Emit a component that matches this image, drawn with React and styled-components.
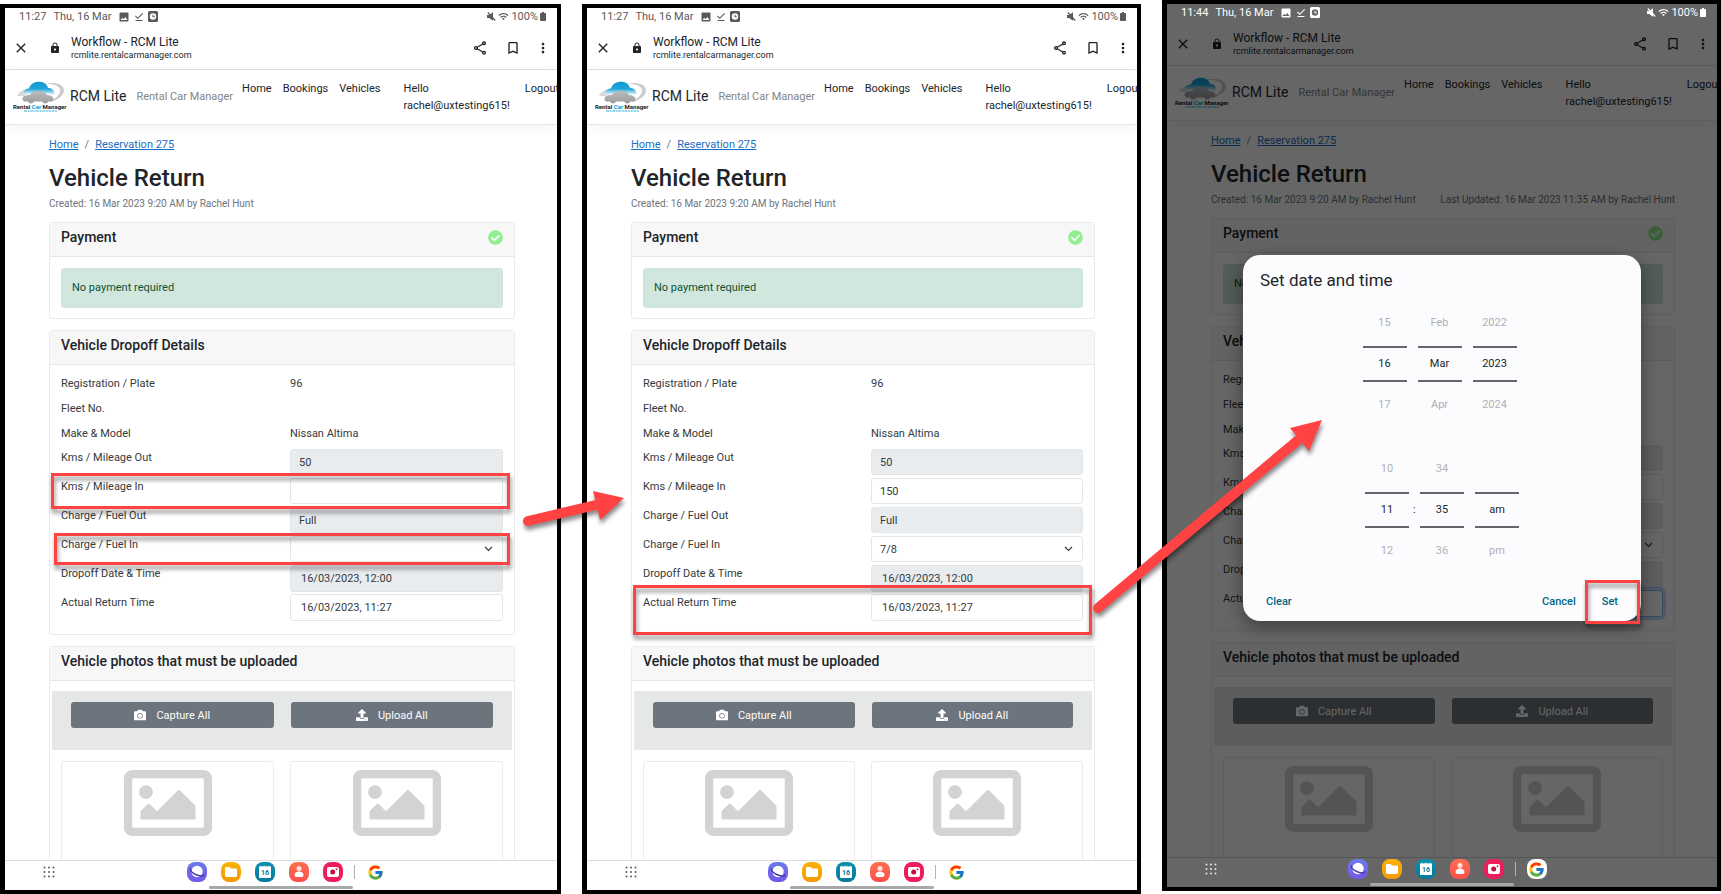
import React, { useState } from "react";
import styled, { createGlobalStyle, css } from "styled-components";
import {
  MdBookmarkBorder,
  MdClose,
  MdDownloadDone,
  MdImage,
  MdLock,
  MdMoreVert,
  MdOutlineShare,
  MdWifi,
} from "react-icons/md";
import { FaCamera, FaCheckCircle, FaUpload } from "react-icons/fa";
import { FcGoogle } from "react-icons/fc";

const GlobalStyle = createGlobalStyle`
  * {
    box-sizing: border-box;
  }
  body {
    margin: 0;
    background: #fff;
    color: #212529;
    font-family: Roboto, "Liberation Sans", sans-serif;
    font-size: 11px;
  }
  button, input, select {
    font: inherit;
    color: inherit;
  }
  svg {
    display: block;
    flex-shrink: 0;
  }
`;

// Board that holds the three tablet screens
const Board = styled.main`
  position: relative;
  display: grid;
  grid-template-columns: 561fr 559fr 559fr;
  gap: 21px;
  height: 100vh;
  min-height: 600px;
  overflow: hidden;
`;

const Screen = styled.section`
  position: relative;
  display: flex;
  flex-direction: column;
  min-width: 0;
  min-height: 0;
  margin: ${({ $raised }) => ($raised ? "0 0 3px" : "4px 0 0")};
  border: 4px solid #000;
  border-left-width: 5px;
  background: #fff;
  overflow: hidden;
`;

// System status bar
const StatusBar = styled.div`
  position: relative;
  z-index: 2;
  display: flex;
  align-items: center;
  height: 17px;
  padding: 0 11px 0 14px;
  color: ${({ $light }) => ($light ? "#fff" : "#5a5a5a")};
`;

const StatusDate = styled.span`
  margin: 0 7px;
`;

const StatusIcons = styled.span`
  display: flex;
  align-items: center;
  gap: 3px;
`;

const StatusRight = styled(StatusIcons)`
  margin-left: auto;
  gap: 2px;
`;

// Browser bar
const BrowserBar = styled.header`
  display: flex;
  align-items: center;
  height: 45px;
  padding: 1px 9px 0 8px;
  border-bottom: 1px solid #e2e2e2;
`;

const IconButton = styled.button`
  display: flex;
  align-items: center;
  justify-content: center;
  width: ${({ $size }) => $size || 16}px;
  padding: 0;
  border: 0;
  background: none;
  color: #202124;
  cursor: pointer;
`;

const PageInfo = styled.div`
  display: flex;
  align-items: center;
  gap: 10px;
  margin-left: 20px;
`;

const PageTitle = styled.div`
  font-size: 12px;
  line-height: 14px;
`;

const PageHost = styled.div`
  font-size: 9px;
  line-height: 12px;
`;

const BrowserActions = styled.div`
  display: flex;
  align-items: center;
  gap: 17px;
  margin-left: auto;
`;

// Site navigation
const NavBar = styled.nav`
  display: flex;
  align-items: flex-start;
  flex-shrink: 0;
  height: 55px;
  padding-left: 8px;
  border-bottom: 1px solid #e9e9e9;
  box-shadow: 0 3px 10px rgba(0, 0, 0, 0.05);
  white-space: nowrap;
  overflow: hidden;
  line-height: 17px;
`;

const Brand = styled.a`
  display: flex;
  align-items: center;
  gap: 3px;
  height: 52px;
  color: inherit;
  text-decoration: none;
`;

const BrandName = styled.span`
  font-size: 14px;
`;

const BrandSub = styled.span`
  margin-left: 7px;
  color: #858585;
`;

const NavLinks = styled.div`
  display: flex;
  gap: 11px;
  margin: 10px 0 0 9px;
`;

const NavLink = styled.a`
  color: inherit;
  text-decoration: none;
`;

const Greeting = styled(NavLink)`
  margin: 10px 15px 0 23px;
`;

const Logout = styled(NavLink)`
  margin-top: 10px;
`;

// Page content
const Content = styled.div`
  flex: 1;
  min-height: 0;
  padding: 12px 42px 0 44px;
  overflow: hidden;
`;

const Breadcrumb = styled.nav`
  display: flex;
  gap: 6px;
  line-height: 16px;
  color: #6c757d;

  a {
    color: #1b6ec2;
  }
`;

const Heading = styled.h1`
  margin: 9px 0 3px;
  font-size: 24px;
  font-weight: 500;
  line-height: 32px;
`;

const Meta = styled.div`
  display: flex;
  justify-content: space-between;
  font-size: 10px;
  line-height: 14px;
  color: #6c757d;
`;

const Card = styled.section`
  margin-top: 11px;
  border: 1px solid #ebebeb;
  border-radius: 3px;
  background: #fff;
`;

const CardHeader = styled.div`
  display: flex;
  align-items: center;
  justify-content: space-between;
  padding: 5px 11px 10px;
  border-bottom: 1px solid #e8e8e8;
  background: #f7f7f7;
  color: #90ee90;
`;

const CardTitle = styled.h2`
  margin: 0;
  font-size: 14px;
  font-weight: 500;
  line-height: 18px;
  color: #212529;
`;

const Alert = styled.p`
  margin: 11px 11px 10px;
  padding: 10px;
  border: 1px solid #cbe4d9;
  border-radius: 3px;
  background: #d1e7dd;
  color: #0f5132;
  line-height: 18px;
`;

const Details = styled.div`
  padding: 6px 11px 11px;
  color: #343a40;
`;

const Row = styled.div`
  position: relative;
  display: grid;
  grid-template-columns: 1fr 1fr;
  gap: 16px;
`;

const Facts = styled.dl`
  margin: 0 0 3px;
  line-height: 25px;

  dd {
    margin: 0;
  }
`;

const FieldRow = styled(Row)`
  height: 29px;

  label {
    line-height: 18px;
  }
`;

const fieldBox = css`
  width: 100%;
  height: ${({ $tall }) => ($tall ? 27 : 26)}px;
  padding: 0 ${({ $tall }) => ($tall ? 10 : 8)}px;
  border: 1px solid #e3e6e9;
  border-radius: 3px;
  background: #fff;
  outline: none;
`;

const Input = styled.input`
  ${fieldBox}

  &:read-only {
    background: #e9ecef;
  }

  ${({ $active }) =>
    $active &&
    css`
      border-color: #86b7fe;
      box-shadow: 0 0 0 3px rgba(13, 110, 253, 0.25);
    `}
`;

const SelectWrap = styled.div`
  position: relative;

  svg {
    position: absolute;
    top: 9px;
    right: 10px;
    pointer-events: none;
  }
`;

const Select = styled.select`
  ${fieldBox}
  appearance: none;
`;

// Red outline around a part that needs attention
const Highlight = styled.span`
  position: absolute;
  z-index: 4;
  inset: ${({ $inset }) => $inset};
  border: 3px solid #ff4343;
  filter: drop-shadow(1px 4px 2px rgba(0, 0, 0, 0.45));
  pointer-events: none;
`;

// Photos
const PhotoActions = styled.div`
  display: grid;
  grid-template-columns: 1fr 1fr;
  gap: 17px;
  margin: 10px 2px 11px;
  padding: 11px 19px 22px;
  background: #e6e8e7;
`;

const PhotoButton = styled.button`
  display: flex;
  align-items: center;
  justify-content: center;
  gap: 10px;
  height: 26px;
  padding: 0;
  border: 0;
  border-radius: 3px;
  background: #6c757d;
  color: #fff;
`;

const Thumbs = styled.div`
  display: grid;
  grid-template-columns: 1fr 1fr;
  gap: 16px;
  padding: 0 11px;
`;

const Thumb = styled.div`
  display: flex;
  justify-content: center;
  height: 180px;
  padding-top: 8px;
  border: 1px solid #ececec;
  border-radius: 3px;
`;

// Tablet task bar
const TaskBar = styled.footer`
  position: relative;
  z-index: 2;
  display: grid;
  grid-template-columns: 1fr auto 1fr;
  grid-template-rows: 22px 6px;
  flex-shrink: 0;
  height: 30px;
  border-top: 1px solid ${({ $dark }) => ($dark ? "#555" : "#dcdcdc")};
  background: ${({ $dark }) => ($dark ? "transparent" : "#fff")};
  color: ${({ $dark }) => ($dark ? "#e8e8e8" : "#5c5c5c")};
`;

const Launcher = styled(IconButton)`
  align-self: center;
  margin-left: 36px;
  color: inherit;
`;

const Apps = styled.div`
  display: flex;
  align-items: center;
  gap: 14px;
  padding-left: 10px;
`;

const AppIcon = styled(IconButton)`
  height: 20px;
  border-radius: 8px;
  background: ${({ $bg }) => $bg};
`;

const AppDivider = styled.span`
  width: 1px;
  height: 14px;
  margin: 0 -3px;
  background: #b5b5b5;
`;

const HomeBar = styled.span`
  grid-row: 2;
  grid-column: 1 / -1;
  justify-self: center;
  align-self: end;
  width: 144px;
  height: 3px;
  border-radius: 2px;
  background: #a8a8a8;
`;

// Date and time dialog
const Scrim = styled.div`
  position: absolute;
  z-index: 1;
  inset: 0;
  display: flex;
  align-items: center;
  justify-content: center;
  padding-bottom: 16px;
  background: rgba(0, 0, 0, 0.6);
`;

const Dialog = styled.div`
  width: 398px;
  max-width: 90%;
  padding: 13px 17px 1px;
  border-radius: 17px;
  background: #fcfcff;
  box-shadow: 0 6px 18px rgba(0, 0, 0, 0.4);
`;

const DialogTitle = styled.h2`
  margin: 0 0 8px;
  font-size: 17px;
  font-weight: 400;
  line-height: 24px;
`;

const Wheels = styled.div`
  display: flex;
  justify-content: center;
  gap: 11px;
  margin-bottom: ${({ $gap }) => $gap}px;
  padding-right: ${({ $shift }) => $shift || 0}px;
`;

const Wheel = styled.div`
  position: relative;
  display: grid;
  grid-template-rows: 46px 36px 46px;
  width: 44px;
`;

const WheelStep = styled.button`
  padding: 0;
  border: 0;
  background: none;
  color: #b0b0b3;
`;

const WheelValue = styled.input`
  width: 100%;
  padding: 0;
  border: solid #63666a;
  border-width: 2px 0;
  background: none;
  text-align: center;
  outline: none;
`;

const Colon = styled.span`
  position: absolute;
  top: 46px;
  left: -7px;
  line-height: 36px;
`;

const DialogActions = styled.div`
  display: flex;
  align-items: center;
  justify-content: space-between;
`;

const ActionGroup = styled.div`
  display: flex;
  gap: 14px;
`;

const TextButton = styled.button`
  position: relative;
  height: 36px;
  padding: 0 6px;
  border: 0;
  background: none;
  color: #006783;
  font-weight: 500;
`;

const Arrows = styled.svg`
  position: absolute;
  z-index: 5;
  inset: 0;
  width: 100%;
  height: 100%;
  pointer-events: none;
  filter: drop-shadow(1px 4px 2px rgba(0, 0, 0, 0.45));
`;

const Logo = () => (
  <svg width="54" height="31" viewBox="0 0 54 31" aria-label="Rental Car Manager">
    <defs>
      <linearGradient id="sky" x1="0" y1="0" x2="0" y2="1">
        <stop offset="0" stopColor="#0f9ad0" />
        <stop offset="0.55" stopColor="#1fa5d8" />
        <stop offset="1" stopColor="#e6f4fa" />
      </linearGradient>
      <linearGradient id="metal" x1="0" y1="0" x2="0" y2="1">
        <stop offset="0" stopColor="#bcbcbe" />
        <stop offset="1" stopColor="#9b9c9f" />
      </linearGradient>
    </defs>
    <path d="M31 3c10-2.500 19.500-.5 20 6 .3 5.500-6 10.500-15.500 12.500 7-4 12-8 11.500-12.500C46.500 4 39 2.500 31 3z" fill="#cbccce" />
    <path d="M4 15c2-4 5-6 9-7l3 3-5 4z" fill="#d6d7d9" />
    <path d="M10 13.500c0-3.500 2.500-6 6-6C17.500 3 21 .8 26 .8s8 2.700 9 6.200c4 0 6.500 2.500 6.500 6.500z" fill="url(#sky)" />
    <path d="M11 20.500c-2-1.200-2-3.500-.5-5 1.500-1.300 4-1.500 6.500-1.500 1.500-2.500 4-4 8-4s7 1.500 9 4c3.500.2 6.500 1.500 6.500 4.300 0 1.200-.7 2-2 2.200h-3.200a3.200 3.200 0 0 1-6 0H21a3.200 3.200 0 0 1-6 0z" fill="url(#metal)" />
    <text x="0" y="28" fontSize="6" fontWeight="700" fill="#222" fontFamily="Roboto, sans-serif">
      Rental
      <tspan fill="#0f9ad0"> Car </tspan>
      Manager
    </text>
    <path d="M11 30h33" stroke="#35b1dd" strokeWidth="1" strokeDasharray="3 .6 2 .5" />
  </svg>
);

const ClockBadge = () => (
  <svg width="10" height="11" viewBox="0 0 10 11">
    <path
      d="M1.500 0h7A1.500 1.500 0 0 1 10 1.500v8A1.500 1.500 0 0 1 8.500 11h-7A1.500 1.500 0 0 1 0 9.500v-8A1.500 1.500 0 0 1 1.500 0zM5 2.300a3.200 3.200 0 1 0 0 6.400 3.200 3.200 0 0 0 0-6.400zm-.5 1.500h1v1.500h1.300v1H4.500z"
      fill="currentColor"
      fillRule="evenodd"
    />
  </svg>
);

const Muted = () => (
  <svg width="9" height="9" viewBox="0 0 9 9">
    <path d="M0 3h2.200L6 .3v8.400L2.200 6H0z" fill="currentColor" />
    <path d="M.8.5l7.400 8" stroke="currentColor" strokeWidth="1.200" />
  </svg>
);

const Battery = () => (
  <svg width="6" height="9" viewBox="0 0 6 9">
    <path d="M2 0h2v1h1.500l.5.500v7l-.5.500h-5L0 8.500v-7L.5 1H2z" fill="currentColor" />
  </svg>
);

const Chevron = () => (
  <svg width="9" height="8" viewBox="0 0 9 8">
    <path d="M1 2l3.500 3.500L8 2" fill="none" stroke="#343a40" strokeWidth="1.200" />
  </svg>
);

const Picture = () => (
  <svg width="88" height="66" viewBox="0 64 512 384" fill="#d3d3d3">
    <path d="M464 64H48C21.490 64 0 85.490 0 112v288c0 26.510 21.490 48 48 48h416c26.510 0 48-21.490 48-48V112c0-26.510-21.490-48-48-48zm-6 336H54a6 6 0 0 1-6-6V118a6 6 0 0 1 6-6h404a6 6 0 0 1 6 6v276a6 6 0 0 1-6 6zM128 152c-22.091 0-40 17.909-40 40s17.909 40 40 40 40-17.909 40-40-17.909-40-40-40zM96 352h320v-80l-87.515-87.515c-4.686-4.686-12.284-4.686-16.971 0L192 304l-39.515-39.515c-4.686-4.686-12.284-4.686-16.971 0L96 304v48z" />
  </svg>
);

const DotGrid = () => (
  <svg width="12" height="12" viewBox="0 0 12 12" fill="currentColor">
    {[1.5, 6, 10.5].map((y) =>
      [1.5, 6, 10.5].map((x) => <circle key={`${x}-${y}`} cx={x} cy={y} r="1" />)
    )}
  </svg>
);

const apps = [
  {
    name: "Internet",
    bg: "linear-gradient(#6b7bea, #7457e8)",
    art: (
      <>
        <circle cx="10" cy="9.500" r="5.700" fill="#fff" />
        <path d="M3.800 6.500c-1.500 2 2 5 6 6.500s7.500 1.500 7-.8" fill="none" stroke="#4a36a8" strokeWidth="1.400" />
      </>
    ),
  },
  {
    name: "My Files",
    bg: "linear-gradient(#fbb106, #f59a05)",
    art: <path d="M4 6.200C4 5.500 4.500 5 5.200 5h3.300l1.500 1.500h4.800c.7 0 1.200.5 1.200 1.200v6.100c0 .7-.5 1.200-1.200 1.200H5.200C4.500 15 4 14.500 4 13.800z" fill="#fff" />,
  },
  {
    name: "Calendar",
    bg: "linear-gradient(#0b8fae, #057a9c)",
    art: (
      <>
        <path d="M4 4.500h1.500V3.700h1v.8h2v-.8h1v.8h1v-.8h1v.8h2v-.8h1v.8H16V15a1 1 0 0 1-1 1H5a1 1 0 0 1-1-1z" fill="#fff" />
        <text x="10" y="13" textAnchor="middle" fontSize="7" fontWeight="700" fill="#057a9c">
          16
        </text>
      </>
    ),
  },
  {
    name: "Contacts",
    bg: "linear-gradient(#ff6f50, #fb4f4c)",
    art: (
      <>
        <circle cx="10" cy="6.500" r="2.500" fill="#ffe1da" />
        <path d="M5.500 13.200c0-2.500 2-3.700 4.500-3.700s4.500 1.200 4.500 3.700c0 1.300-1 1.800-4.500 1.800s-4.500-.5-4.500-1.800z" fill="#fff" />
      </>
    ),
  },
  {
    name: "Camera",
    bg: "#ee1c5a",
    art: (
      <>
        <rect x="4" y="5" width="12" height="10" rx="2" fill="#fff" />
        <circle cx="9.700" cy="10" r="2.500" fill="#c80b43" />
        <circle cx="13.500" cy="7.300" r="1" fill="#ee1c5a" />
      </>
    ),
  },
];

const StatusRow = ({ time, light }) => (
  <StatusBar $light={light}>
    {time}
    <StatusDate>Thu, 16 Mar</StatusDate>
    <StatusIcons>
      <MdImage size={12} />
      <MdDownloadDone size={12} />
      <ClockBadge />
    </StatusIcons>
    <StatusRight>
      <Muted />
      <MdWifi size={11} />
      100%
      <Battery />
    </StatusRight>
  </StatusBar>
);

const Browser = () => (
  <BrowserBar>
    <IconButton aria-label="Close">
      <MdClose size={16} />
    </IconButton>
    <PageInfo>
      <MdLock size={12} />
      <div>
        <PageTitle>Workflow - RCM Lite</PageTitle>
        <PageHost>rcmlite.rentalcarmanager.com</PageHost>
      </div>
    </PageInfo>
    <BrowserActions>
      <IconButton aria-label="Share">
        <MdOutlineShare size={16} />
      </IconButton>
      <IconButton aria-label="Bookmark">
        <MdBookmarkBorder size={16} />
      </IconButton>
      <IconButton aria-label="More" $size={10}>
        <MdMoreVert size={16} />
      </IconButton>
    </BrowserActions>
  </BrowserBar>
);

const SiteNav = () => (
  <NavBar>
    <Brand href="#">
      <Logo />
      <BrandName>RCM Lite</BrandName>
      <BrandSub>Rental Car Manager</BrandSub>
    </Brand>
    <NavLinks>
      <NavLink href="#">Home</NavLink>
      <NavLink href="#">Bookings</NavLink>
      <NavLink href="#">Vehicles</NavLink>
    </NavLinks>
    <Greeting href="#">
      Hello
      <br />
      rachel@uxtesting615!
    </Greeting>
    <Logout href="#">Logout</Logout>
  </NavBar>
);

const Field = ({ id, label, value, readOnly, tall, active, mark }) => {
  const [text, setText] = useState(value);
  return (
    <FieldRow>
      <label htmlFor={id}>{label}</label>
      <div>
        <Input
          id={id}
          value={text}
          readOnly={readOnly}
          onChange={(e) => setText(e.target.value)}
          $tall={tall}
          $active={active}
        />
      </div>
      {mark && <Highlight $inset={mark} />}
    </FieldRow>
  );
};

const FuelField = ({ id, value, mark }) => {
  const [fuel, setFuel] = useState(value);
  return (
    <FieldRow>
      <label htmlFor={id}>Charge / Fuel In</label>
      <SelectWrap>
        <Select id={id} value={fuel} onChange={(e) => setFuel(e.target.value)}>
          <option value=""></option>
          <option value="7/8">7/8</option>
          <option value="Full">Full</option>
        </Select>
        <Chevron />
      </SelectWrap>
      {mark && <Highlight $inset={mark} />}
    </FieldRow>
  );
};

const ReturnPage = ({ id, kms, fuel, updated, marks = {}, active }) => (
  <Content>
    <Breadcrumb>
      <a href="#">Home</a>
      <span>/</span>
      <a href="#">Reservation 275</a>
    </Breadcrumb>
    <Heading>Vehicle Return</Heading>
    <Meta>
      <span>Created: 16 Mar 2023 9:20 AM by Rachel Hunt</span>
      {updated && <span>Last Updated: {updated} by Rachel Hunt</span>}
    </Meta>

    <Card>
      <CardHeader>
        <CardTitle>Payment</CardTitle>
        <FaCheckCircle size={15} />
      </CardHeader>
      <Alert>No payment required</Alert>
    </Card>

    <Card>
      <CardHeader>
        <CardTitle>Vehicle Dropoff Details</CardTitle>
      </CardHeader>
      <Details>
        <Facts>
          <Row>
            <dt>Registration / Plate</dt>
            <dd>96</dd>
          </Row>
          <Row>
            <dt>Fleet No.</dt>
            <dd></dd>
          </Row>
          <Row>
            <dt>Make &amp; Model</dt>
            <dd>Nissan Altima</dd>
          </Row>
        </Facts>
        <Field id={`${id}-kms-out`} label="Kms / Mileage Out" value="50" readOnly />
        <Field id={`${id}-kms-in`} label="Kms / Mileage In" value={kms} mark={marks.kms} />
        <Field id={`${id}-fuel-out`} label="Charge / Fuel Out" value="Full" readOnly />
        <FuelField id={`${id}-fuel-in`} value={fuel} mark={marks.fuel} />
        <Field id={`${id}-dropoff`} label="Dropoff Date & Time" value="16/03/2023, 12:00" readOnly tall />
        <Field
          id={`${id}-return`}
          label="Actual Return Time"
          value="16/03/2023, 11:27"
          tall
          active={active}
          mark={marks.time}
        />
      </Details>
    </Card>

    <Card>
      <CardHeader>
        <CardTitle>Vehicle photos that must be uploaded</CardTitle>
      </CardHeader>
      <PhotoActions>
        <PhotoButton>
          <FaCamera size={12} />
          Capture All
        </PhotoButton>
        <PhotoButton>
          <FaUpload size={12} />
          Upload All
        </PhotoButton>
      </PhotoActions>
      <Thumbs>
        <Thumb>
          <Picture />
        </Thumb>
        <Thumb>
          <Picture />
        </Thumb>
      </Thumbs>
    </Card>
  </Content>
);

const Tasks = ({ dark }) => (
  <TaskBar $dark={dark}>
    <Launcher aria-label="All apps">
      <DotGrid />
    </Launcher>
    <Apps>
      {apps.map((app) => (
        <AppIcon key={app.name} $bg={app.bg} $size={20} aria-label={app.name}>
          <svg width="20" height="20" viewBox="0 0 20 20">
            {app.art}
          </svg>
        </AppIcon>
      ))}
      <AppDivider />
      <AppIcon $bg="#fff" $size={20} aria-label="Google">
        <FcGoogle size={17} />
      </AppIcon>
    </Apps>
    <HomeBar />
  </TaskBar>
);

const dateWheels = [
  { label: "Day", values: ["15", "16", "17"] },
  { label: "Month", values: ["Feb", "Mar", "Apr"] },
  { label: "Year", values: ["2022", "2023", "2024"] },
];

const timeWheels = [
  { label: "Hour", values: ["10", "11", "12"] },
  { label: "Minute", values: ["34", "35", "36"], colon: true },
  { label: "Period", values: ["", "am", "pm"] },
];

const WheelGroup = ({ wheels, shift, gap }) => (
  <Wheels $shift={shift} $gap={gap}>
    {wheels.map(({ label, values, colon }) => (
      <Wheel key={label}>
        {colon && <Colon>:</Colon>}
        <WheelStep aria-label={`Previous ${label}`}>{values[0]}</WheelStep>
        <WheelValue aria-label={label} defaultValue={values[1]} />
        <WheelStep aria-label={`Next ${label}`}>{values[2]}</WheelStep>
      </Wheel>
    ))}
  </Wheels>
);

const DateTimeDialog = () => (
  <Scrim>
    <Dialog role="dialog" aria-label="Set date and time">
      <DialogTitle>Set date and time</DialogTitle>
      <WheelGroup wheels={dateWheels} shift={5} gap={18} />
      <WheelGroup wheels={timeWheels} gap={10} />
      <DialogActions>
        <TextButton>Clear</TextButton>
        <ActionGroup>
          <TextButton>Cancel</TextButton>
          <TextButton>
            Set
            <Highlight $inset="-4px -16px -4px -11px" />
          </TextButton>
        </ActionGroup>
      </DialogActions>
    </Dialog>
  </Scrim>
);

const App = () => (
  <>
    <GlobalStyle />
    <Board>
      {/* Empty mileage and fuel */}
      <Screen>
        <StatusRow time="11:27" />
        <Browser />
        <SiteNav />
        <ReturnPage
          id="empty"
          kms=""
          fuel=""
          marks={{ kms: "-5px -7px -2px -10px", fuel: "-3px -7px 0 -7px" }}
        />
        <Tasks />
      </Screen>

      {/* Mileage and fuel filled in */}
      <Screen>
        <StatusRow time="11:27" />
        <Browser />
        <SiteNav />
        <ReturnPage id="filled" kms="150" fuel="7/8" marks={{ time: "-9px -9px -12px -10px" }} />
        <Tasks />
      </Screen>

      {/* Return time picker */}
      <Screen $raised>
        <StatusRow time="11:44" light />
        <Browser />
        <SiteNav />
        <ReturnPage id="picker" kms="150" fuel="7/8" updated="16 Mar 2023 11:35 AM" active />
        <Tasks dark />
        <DateTimeDialog />
      </Screen>

      <Arrows viewBox="0 0 1721 894" preserveAspectRatio="none">
        <path d="M528 521L600 504M1098 608L1303 436" stroke="#ff4343" strokeWidth="10" strokeLinecap="round" />
        <path d="M593 491L624 498L600 520zM1290 428L1322 420L1309 451z" fill="#ff4343" />
      </Arrows>
    </Board>
  </>
);

export default App;
